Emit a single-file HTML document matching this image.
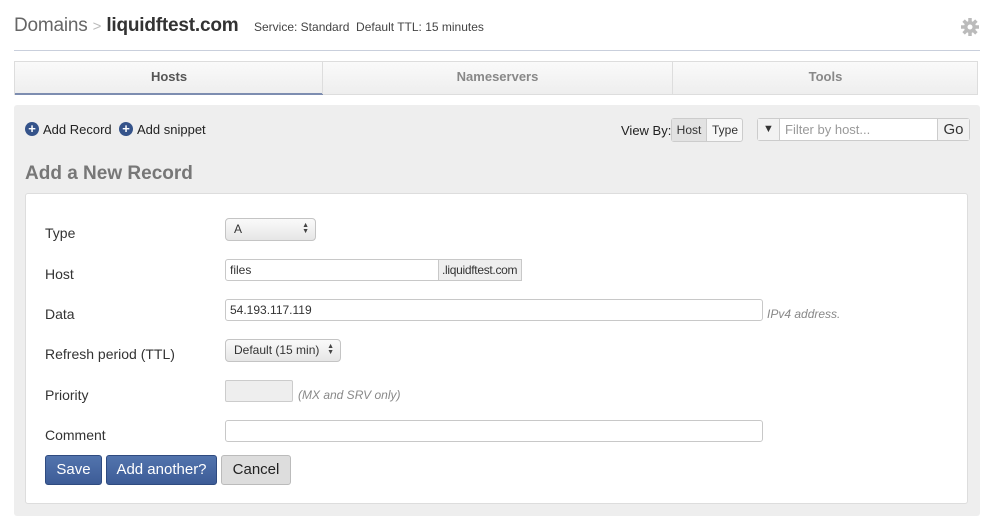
<!DOCTYPE html>
<html><head><meta charset="utf-8"><style>
*{box-sizing:border-box;margin:0;padding:0}
body{width:987px;height:516px;background:#fff;font-family:"Liberation Sans",Arial,sans-serif;position:relative;overflow:hidden;color:#333}
.a{position:absolute}
.inp{position:absolute;background:#fff;border:1px solid #c8c8c8;border-radius:3px;font-size:12px;padding-left:4px;line-height:20px}
.lbl{position:absolute;left:45px;font-size:14px;color:#333}
.sel{position:absolute;border:1px solid #c4c4c4;border-radius:4px;background:linear-gradient(#fafafa,#e6e6e6);font-size:12px;padding-left:8px;line-height:20px}
.arr{position:absolute;right:6px;top:4px;font-size:7px;line-height:6px;color:#444}
.btn{position:absolute;top:455px;height:30px;border-radius:3px;font-size:15px;text-align:center;line-height:28px}
</style></head><body>
<div class="a" style="left:14px;top:15px;font-size:19px;color:#666;letter-spacing:-0.2px">Domains <span style="color:#bbb;font-size:15px">&gt;</span> <b style="color:#333">liquidftest.com</b></div>
<div class="a" style="left:254px;top:20px;font-size:12px;color:#444">Service: Standard&nbsp; Default TTL: 15 minutes</div>
<svg class="a" style="left:960px;top:17px" width="20" height="20" viewBox="0 0 20 20"><g fill="#bbb"><circle cx="10" cy="10" r="6"/><g stroke="#bbb" stroke-width="3.5"><line x1="10" y1="1" x2="10" y2="19"/><line x1="1" y1="10" x2="19" y2="10"/><line x1="3.6" y1="3.6" x2="16.4" y2="16.4"/><line x1="16.4" y1="3.6" x2="3.6" y2="16.4"/></g></g><circle cx="10" cy="10" r="2.5" fill="#fff"/></svg>
<div class="a" style="left:14px;top:50px;width:966px;height:1px;background:#c9cfdc"></div>
<div class="a" style="left:14px;top:61px;width:964px;height:34px;border:1px solid #ddd;background:linear-gradient(#fafafa,#eee)"></div>
<div class="a" style="left:15px;top:62px;width:308px;height:33px;border-bottom:2px solid #7d8db0;font-size:13px;font-weight:bold;color:#555;text-align:center;line-height:29px">Hosts</div>
<div class="a" style="left:322px;top:62px;width:1px;height:32px;background:#ddd"></div>
<div class="a" style="left:323px;top:62px;width:349px;font-size:13px;font-weight:bold;color:#888;text-align:center;line-height:29px">Nameservers</div>
<div class="a" style="left:672px;top:62px;width:1px;height:32px;background:#ddd"></div>
<div class="a" style="left:673px;top:62px;width:305px;font-size:13px;font-weight:bold;color:#888;text-align:center;line-height:29px">Tools</div>
<div class="a" style="left:14px;top:105px;width:966px;height:411px;background:#eee;border-radius:3px"></div>
<div class="a" style="left:25px;top:122px;width:14px;height:14px;border-radius:50%;background:#35538a;color:#fff;font-size:13px;font-weight:bold;line-height:14px;text-align:center">+</div>
<div class="a" style="left:43px;top:122px;font-size:13px;color:#222">Add Record</div>
<div class="a" style="left:119px;top:122px;width:14px;height:14px;border-radius:50%;background:#35538a;color:#fff;font-size:13px;font-weight:bold;line-height:14px;text-align:center">+</div>
<div class="a" style="left:137px;top:122px;font-size:13px;color:#222">Add snippet</div>
<div class="a" style="left:621px;top:123px;font-size:13px;color:#222">View By:</div>
<div class="a" style="left:671px;top:118px;width:72px;height:24px;border:1px solid #ccc;border-radius:3px;background:#f7f7f7"></div>
<div class="a" style="left:672px;top:119px;width:35px;height:22px;background:#e2e2e2;font-size:12px;line-height:22px;text-align:center;border-right:1px solid #ccc">Host</div>
<div class="a" style="left:708px;top:119px;width:34px;font-size:12px;line-height:22px;text-align:center">Type</div>
<div class="a" style="left:757px;top:118px;width:213px;height:23px;border:1px solid #ccc;border-radius:3px;background:#fff"></div>
<div class="a" style="left:758px;top:119px;width:22px;height:21px;background:#f2f2f2;border-right:1px solid #ccc;text-align:center;font-size:11px;line-height:21px">▼</div>
<div class="a" style="left:785px;top:122px;font-size:13px;color:#999">Filter by host...</div>
<div class="a" style="left:937px;top:119px;width:32px;height:21px;background:#f2f2f2;border-left:1px solid #ccc;text-align:center;font-size:15px;line-height:21px">Go</div>
<div class="a" style="left:25px;top:163px;font-size:19px;font-weight:bold;color:#777">Add a New Record</div>
<div class="a" style="left:25px;top:193px;width:943px;height:311px;background:#fff;border:1px solid #ddd;border-radius:3px"></div>
<div class="lbl" style="top:225px">Type</div>
<div class="sel" style="left:225px;top:218px;width:91px;height:23px">A<div class="arr">▲<br>▼</div></div>
<div class="lbl" style="top:266px">Host</div>
<div class="inp" style="left:225px;top:259px;width:214px;height:22px;border-radius:3px 0 0 3px">files</div>
<div class="a" style="left:438px;top:259px;width:84px;height:22px;border:1px solid #c8c8c8;background:#eee;font-size:12px;line-height:20px;padding-left:3px;letter-spacing:-0.3px">.liquidftest.com</div>
<div class="lbl" style="top:306px">Data</div>
<div class="inp" style="left:225px;top:299px;width:538px;height:22px">54.193.117.119</div>
<div class="a" style="left:767px;top:307px;font-size:12px;font-style:italic;color:#888">IPv4 address.</div>
<div class="lbl" style="top:346px">Refresh period (TTL)</div>
<div class="sel" style="left:225px;top:339px;width:116px;height:23px">Default (15 min)<div class="arr">▲<br>▼</div></div>
<div class="lbl" style="top:387px">Priority</div>
<div class="a" style="left:225px;top:380px;width:68px;height:22px;border:1px solid #ccc;border-radius:2px;background:#eee"></div>
<div class="a" style="left:298px;top:388px;font-size:12px;font-style:italic;color:#888">(MX and SRV only)</div>
<div class="lbl" style="top:427px">Comment</div>
<div class="inp" style="left:225px;top:420px;width:538px;height:22px"></div>
<div class="btn" style="left:45px;width:57px;background:linear-gradient(#5274ad,#3d5c97);border:1px solid #2f4b80;color:#fff">Save</div>
<div class="btn" style="left:106px;width:111px;background:linear-gradient(#5274ad,#3d5c97);border:1px solid #2f4b80;color:#fff">Add another?</div>
<div class="btn" style="left:221px;width:70px;background:#ddd;border:1px solid #bbb;color:#222">Cancel</div>
</body></html>
